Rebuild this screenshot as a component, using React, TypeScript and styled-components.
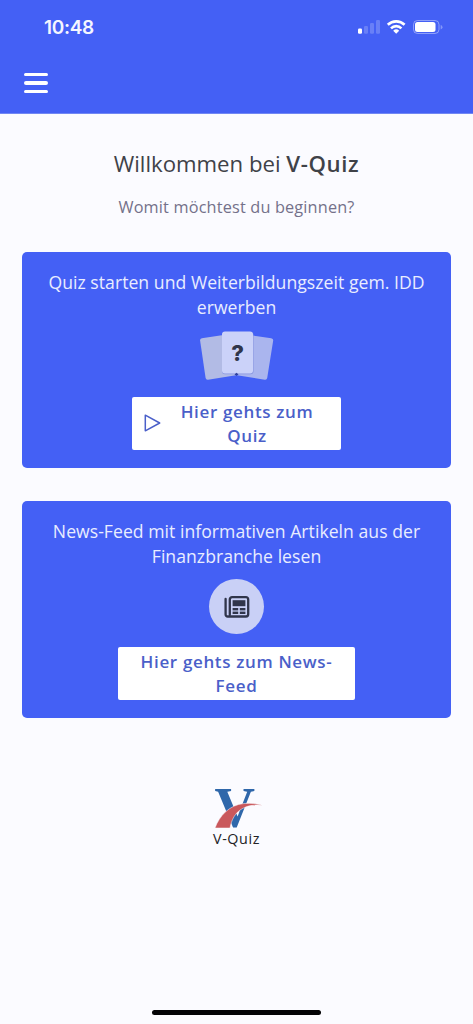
import React from "react";
import styled, { createGlobalStyle } from "styled-components";

const BLUE = "#4460f5";
const INK = "#30354b";

const GlobalStyle = createGlobalStyle`
  * { box-sizing: border-box; }
  body {
    margin: 0;
    background: #fbfbff;
    font-family: "Open Sans", "Noto Sans", sans-serif;
  }
`;

const Screen = styled.div`
  height: 1024px;
  display: flex;
  flex-direction: column;
  align-items: center;
  overflow: hidden;
`;

const Header = styled.header`
  width: 100%;
  height: 114px;
  flex: none;
  background: ${BLUE};
  border-bottom: 1px solid #7187f3;
`;

const StatusBar = styled.div`
  height: 54px;
  padding: 0 30px 0 44px;
  display: flex;
  justify-content: space-between;
  align-items: center;
`;

const Clock = styled.span`
  padding-top: 1px;
  font: 600 19px/25px Inter, sans-serif;
  letter-spacing: -0.3px;
  color: #f4f6ff;
`;

const MenuButton = styled.button`
  display: flex;
  flex-direction: column;
  gap: 5px;
  width: 24px;
  margin: 19px 0 0 24px;
  padding: 0;
  border: 0;
  background: none;
`;

const MenuLine = styled.span`
  height: 3.4px;
  border-radius: 2px;
  background: #fff;
`;

const Title = styled.h1`
  margin: 34px 0 0;
  font-size: 22.2px;
  line-height: 32px;
  font-weight: 400;
  color: #3f4248;
  white-space: nowrap;

  b {
    font-weight: 600;
    letter-spacing: 0.6px;
  }
`;

const Subtitle = styled.p`
  margin: 15px 0 0;
  font-size: 16.3px;
  line-height: 24px;
  letter-spacing: 0.16px;
  color: #74718a;
  white-space: nowrap;
`;

const Card = styled.section<{ $top: number; $height: number }>`
  width: 429px;
  height: ${(p) => p.$height}px;
  flex: none;
  margin-top: ${(p) => p.$top}px;
  padding-top: 18px;
  border-radius: 5px;
  background: ${BLUE};
  display: flex;
  flex-direction: column;
  align-items: center;
`;

const CardText = styled.p`
  margin: 0;
  font-size: 17.6px;
  line-height: 25.4px;
  letter-spacing: 0.04px;
  text-align: center;
  color: #e9edff;
  white-space: nowrap;
`;

const CardsArt = styled.svg`
  display: block;
  margin-top: 9px;
`;

const NewsBadge = styled.div`
  width: 55px;
  height: 55px;
  margin-top: 9.5px;
  border-radius: 50%;
  background: #c9d0f6;
  display: flex;
  align-items: center;
  justify-content: center;
`;

const Action = styled.button<{ $width: number; $inset?: number }>`
  width: ${(p) => p.$width}px;
  height: 53.5px;
  margin: auto 0 17.5px;
  padding: 2px ${(p) => p.$inset ?? 0}px 0 0;
  border: 0;
  border-radius: 2px;
  background: #fff;
  color: #4a5fc9;
  display: flex;
  align-items: center;
  justify-content: center;
  font: 600 17px/24.2px "Open Sans", "Noto Sans", sans-serif;
  letter-spacing: 0.65px;
  white-space: nowrap;
`;

const PlayIcon = styled.svg`
  flex: none;
  margin: -3px 20px 0 0;
`;

const Brand = styled.footer`
  margin-top: 68px;
  display: flex;
  flex-direction: column;
  align-items: center;
`;

const BrandMarkSvg = styled.svg`
  display: block;
  overflow: visible;
`;

const BrandName = styled.span`
  font-size: 14.3px;
  line-height: 20px;
  letter-spacing: 0.6px;
  font-weight: 500;
  color: #222226;
`;

const HomeIndicator = styled.div`
  width: 169px;
  height: 5px;
  margin: auto 0 9px;
  border-radius: 3px;
  background: #030306;
`;

function StatusIcons() {
  return (
    <svg width="86" height="18" viewBox="357 18 86 18" fill="#fff">
      <rect x="358" y="28.5" width="4" height="5.2" rx="1.2" />
      <g opacity="0.2">
        <rect x="364" y="26" width="4" height="7.7" rx="1.2" />
        <rect x="370" y="23" width="4" height="10.7" rx="1.2" />
        <rect x="376" y="20" width="4" height="13.7" rx="1.2" />
      </g>
      <g fill="none" stroke="#fff" strokeWidth="2.6">
        <path d="M387.8 24.8a12 12 0 0 1 16.8 0" />
        <path d="M391 28.3a7.4 7.4 0 0 1 10.4 0" />
      </g>
      <path d="M393.2 30.7a4.3 4.3 0 0 1 6 0l-3 3z" />
      <rect x="413.5" y="20.5" width="25.5" height="13" rx="4" fill="none" stroke="#fff" strokeOpacity="0.4" />
      <rect x="415" y="22" width="20.5" height="10" rx="2.5" />
      <path d="M440.7 25v4.4q1.8-.6 1.8-2.2t-1.8-2.2" opacity="0.35" />
    </svg>
  );
}

function QuizCards() {
  return (
    <CardsArt width="78" height="52" viewBox="198 330 78 52">
      <path d="M201.8 338.2L230 334l6 41.2-28 4.6q-2 .3-2.4-1.7l-5.5-37.5q-.2-2 1.7-2.4z" fill="#b2bbe5" />
      <path d="M271.2 338.2L243 334l-6 41.2 27.8 4.6q2 .3 2.4-1.7l6-37.5q.2-2-2-2.4z" fill="#aab5ee" />
      <rect x="222" y="332.3" width="31.5" height="42" rx="3" fill="#8795df" />
      <rect x="222" y="331.5" width="31" height="42" rx="3" fill="#cbd2f9" />
      <path d="M234.5 374.5l2-1.8 2 1.8-2 1.3z" fill="#30419f" />
      <text x="237.7" y="361" textAnchor="middle" fontFamily="Inter, sans-serif" fontWeight="800" fontSize="22" fill={INK}>?</text>
    </CardsArt>
  );
}

function NewsIcon() {
  return (
    <svg width="26" height="22" viewBox="0 0 26 22" fill="none" stroke={INK} strokeWidth="2.3" strokeLinejoin="round" strokeLinecap="round">
      <path d="M1.6 3v15.5a2 2 0 0 0 2 2H22a2.2 2.2 0 0 0 2.2-2.2V3.4A2.2 2.2 0 0 0 22 1.2H8A2.2 2.2 0 0 0 5.8 3.4v15" />
      <g fill={INK} stroke="none">
        <rect x="8.6" y="4.2" width="12.8" height="6" />
        <rect x="8.6" y="12" width="5.6" height="2.4" />
        <rect x="15.8" y="12" width="5.6" height="2.4" />
        <rect x="8.6" y="15.6" width="5.6" height="2.4" />
        <rect x="15.8" y="15.6" width="5.6" height="2.4" />
      </g>
    </svg>
  );
}

function BrandMark() {
  return (
    <BrandMarkSvg width="50" height="43" viewBox="212 786 50 43">
      <text x="214.5" y="826.5" fontFamily="Liberation Serif, serif" fontWeight="700" fontSize="57" textLength="40.5" lengthAdjust="spacingAndGlyphs" fill="#2f67aa">V</text>
      <path d="M215 828c4.5-12 14-23 29-24.5q10-1 18.5 1.7-13-1.2-20.5 3.6c-7 4-10.5 11-12 19.2z" fill="#c9585c" stroke="#fbfbff" strokeWidth="0.5" />
    </BrandMarkSvg>
  );
}

export default function App() {
  return (
    <Screen>
      <GlobalStyle />
      <Header>
        <StatusBar>
          <Clock>10:48</Clock>
          <StatusIcons />
        </StatusBar>
        <MenuButton aria-label="Menü">
          <MenuLine />
          <MenuLine />
          <MenuLine />
        </MenuButton>
      </Header>
      <Title>Willkommen bei <b>V-Quiz</b></Title>
      <Subtitle>Womit möchtest du beginnen?</Subtitle>
      <Card $top={33} $height={215.5}>
        <CardText>
          Quiz starten und Weiterbildungszeit gem. IDD<br />erwerben
        </CardText>
        <QuizCards />
        <Action $width={209.5} $inset={16}>
          <PlayIcon width="17" height="18" viewBox="0 0 17 18" fill="none" stroke="#4a5fc9" strokeWidth="1.5" strokeLinejoin="round">
            <path d="M1.3 1.2v15.6L15.7 9z" />
          </PlayIcon>
          <span>Hier gehts zum<br />Quiz</span>
        </Action>
      </Card>
      <Card $top={33.5} $height={216.5}>
        <CardText>
          News-Feed mit informativen Artikeln aus der<br />Finanzbranche lesen
        </CardText>
        <NewsBadge><NewsIcon /></NewsBadge>
        <Action $width={237.5}>
          <span>Hier gehts zum News-<br />Feed</span>
        </Action>
      </Card>
      <Brand>
        <BrandMark />
        <BrandName>V-Quiz</BrandName>
      </Brand>
      <HomeIndicator />
    </Screen>
  );
}
